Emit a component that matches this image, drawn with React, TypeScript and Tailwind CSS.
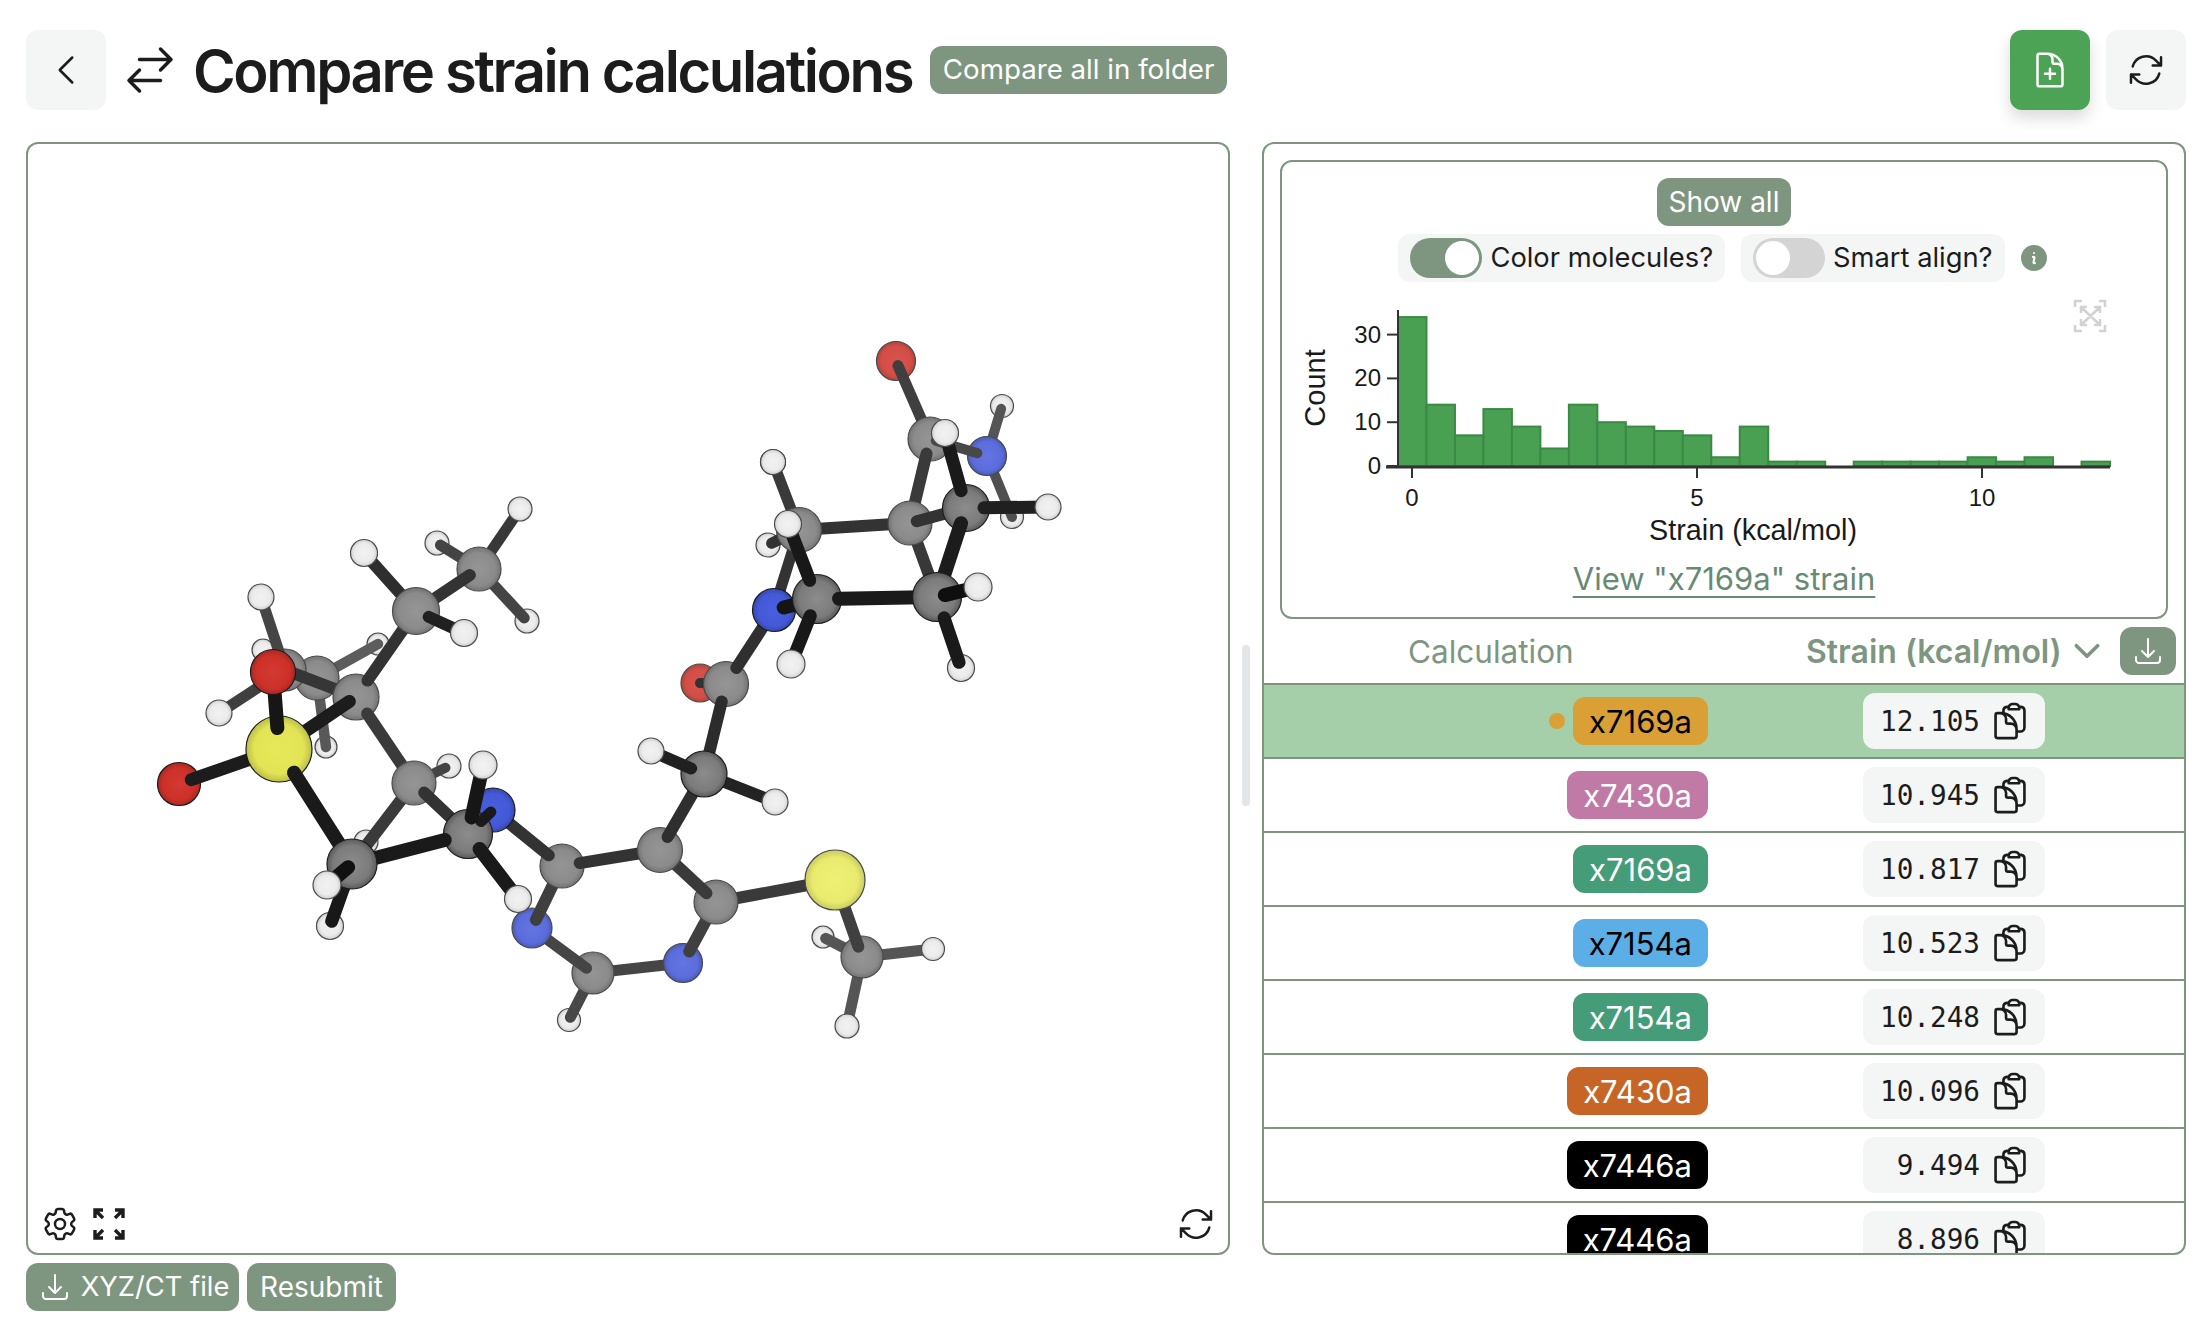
import {
  HiOutlineArrowDownTray,
  HiOutlineArrowPath,
  HiOutlineArrowsRightLeft,
  HiOutlineChevronDown,
  HiOutlineChevronLeft,
  HiOutlineClipboardDocument,
  HiOutlineCog6Tooth,
  HiOutlineDocumentPlus,
  HiInformationCircle,
} from 'react-icons/hi2';

type Kind = 'C' | 'D' | 'H' | 'Od' | 'Ol' | 'Nd' | 'Nl' | 'Sd' | 'Sl';

const atoms: Record<string, [number, number, number, Kind]> = {
  // left ring and sulfonyl
  o1: [273, 672, 22.5, 'Od'],
  s1: [279, 749, 33, 'Sd'],
  o2: [179, 784, 21.5, 'Od'],
  h1: [261, 597, 13, 'H'],
  c1: [285, 670, 21, 'C'],
  c2: [317, 678, 22, 'C'],
  h2: [263, 650, 11, 'H'],
  h3: [219, 713, 13, 'H'],
  h4: [378, 644, 11, 'H'],
  h5: [326, 747, 11, 'H'],
  c3: [356, 697, 23, 'C'],
  c4: [416, 611, 23.5, 'C'],
  h6: [364, 553, 13.5, 'H'],
  h7: [464, 633, 13.5, 'H'],
  c5: [479, 569, 22, 'C'],
  h8: [437, 543, 12, 'H'],
  h9: [527, 621, 12, 'H'],
  h10: [520, 509, 12, 'H'],
  c6: [414, 783, 22, 'C'],
  h11: [449, 766, 12, 'H'],
  h12: [483, 765, 14, 'H'],
  n1: [493, 810, 22, 'Nd'],
  c7: [468, 834, 24.5, 'D'],
  c8: [352, 864, 25, 'D'],
  h13: [366, 842, 12, 'H'],
  h14: [327, 885, 14, 'H'],
  h15: [330, 926, 13.5, 'H'],
  h16: [518, 899, 13.5, 'H'],
  // pyrimidine
  c9: [562, 866, 22, 'C'],
  n2: [532, 928, 20, 'Nl'],
  c10: [660, 850, 22.5, 'C'],
  c11: [716, 902, 22, 'C'],
  c12: [593, 973, 21, 'C'],
  n3: [683, 963, 19.5, 'Nl'],
  h17: [569, 1020, 11.5, 'H'],
  s2: [835, 880, 30, 'Sl'],
  c13: [862, 957, 21, 'C'],
  h18: [823, 937, 11, 'H'],
  h19: [933, 949, 11.5, 'H'],
  h20: [847, 1026, 12, 'H'],
  c14: [704, 774, 23, 'D'],
  h21: [775, 802, 13, 'H'],
  h22: [651, 751, 13, 'H'],
  // upper cage
  o3: [896, 361, 19.5, 'Ol'],
  c15: [930, 439, 22, 'C'],
  h23: [945, 433, 13.5, 'H'],
  n4: [987, 456, 19.5, 'Nl'],
  h24: [1002, 406, 11.5, 'H'],
  c16: [966, 508, 23.5, 'D'],
  c17: [910, 523, 22, 'C'],
  h25: [1048, 507, 13, 'H'],
  h26: [1012, 517, 11.5, 'H'],
  c18: [799, 530, 22.5, 'C'],
  h27: [773, 462, 12.5, 'H'],
  h28: [788, 524, 13.5, 'H'],
  h29: [768, 545, 12, 'H'],
  c19: [817, 599, 24.5, 'D'],
  c20: [937, 597, 24.5, 'D'],
  h30: [978, 587, 14, 'H'],
  n5: [774, 610, 21.5, 'Nd'],
  h31: [791, 664, 14, 'H'],
  h32: [961, 668, 13.5, 'H'],
  c21: [726, 684, 22.5, 'C'],
  o4: [700, 683, 19, 'Ol'],
};

// far to near; a string draws an atom, a tuple draws a bond [from, to, width, colour, inset at from, inset at to]
type Op = string | [string, string, number, string, number?, number?];

const scene: Op[] = [
  // left cluster
  'h2', 'h4', 'h5',
  ['c2', 'h4', 10.5, '#5c5c5c'],
  ['c2', 'h5', 10.5, '#585858'],
  'c2', 'c1',
  ['h1', 'c1', 11, '#454545'],
  ['h3', 'c1', 11, '#3f3f3f', 4],
  'h1', 'h3',
  ['c1', 'c3', 12, '#363636', 8],
  'c3',
  ['c3', 'c4', 12, '#333333', 20],
  'h8', 'h9',
  ['c5', 'h8', 11, '#444444', 0, 4],
  ['c5', 'h9', 11, '#444444', 0, 4],
  ['c5', 'h10', 11, '#383838'],
  'h10',
  'c5',
  ['c5', 'c4', 12, '#333333', 11],
  ['c4', 'h6', 12, '#2e2e2e'],
  'c4',
  ['c4', 'h7', 12, '#202020', 14],
  'h6', 'h7',
  'h13', 'h11',
  ['c3', 'c6', 12, '#3a3a3a', 20],
  ['c6', 'c8', 12, '#3a3a3a'],
  ['c6', 'h11', 10, '#444444', 0, 4],
  'c6',
  'o2',
  ['o2', 's1', 13, '#1c1c1c', 13],
  ['c3', 's1', 13, '#1c1c1c', 8],
  's1',
  ['s1', 'o1', 14, '#161616', 21],
  'o1',
  ['s1', 'c8', 14, '#1a1a1a', 28],
  'h15',
  ['h15', 'c8', 13, '#181818', 5],
  // pyrimidine
  'h17',
  ['h17', 'c12', 11, '#484848', 3],
  ['c12', 'n3', 11, '#454545'],
  'c12',
  ['n2', 'c12', 11, '#454545', 0, 8],
  'n2',
  ['n2', 'c9', 12, '#3f3f3f', 9],
  'c9',
  ['n1', 'c9', 12, '#333333', 0, 17],
  'n1',
  ['c6', 'c7', 12, '#333333', 14],
  'c7',
  ['c8', 'c7', 14, '#1a1a1a', 24, 24],
  'c8',
  ['c8', 'h14', 14, '#111111', 5],
  'h14',
  ['c7', 'n1', 11, '#1a1a1a', 18, 3],
  ['c7', 'h12', 14, '#161616', 17],
  ['c7', 'h16', 14, '#1a1a1a', 19],
  'h12', 'h16',
  'n3',
  ['n3', 'c11', 12, '#404040', 13],
  ['c11', 's2', 12, '#3a3a3a'],
  'c11',
  ['c11', 'c10', 12, '#3a3a3a', 13],
  ['c9', 'c10', 12, '#333333', 18],
  'c10',
  ['c10', 'c14', 12, '#2f2f2f', 15],
  'h18',
  ['h18', 'c13', 11, '#555555', 3],
  ['c13', 'h19', 11, '#555555'],
  ['c13', 'h20', 11, '#555555'],
  'h19', 'h20',
  'c13',
  ['s2', 'c13', 12, '#404040', 0, 11],
  's2',
  // upper cage
  'o4',
  ['c21', 'o4', 10, '#333333'],
  'c21',
  ['c21', 'c14', 12, '#2c2c2c', 18],
  ['c14', 'h21', 12, '#232323'],
  'c14',
  ['c14', 'h22', 12, '#202020', 14],
  'h21', 'h22',
  ['n5', 'c21', 12, '#303030', 0, 19],
  'h29', 'h27',
  ['h29', 'c18', 11, '#333333', 4],
  ['h27', 'c18', 11, '#3a3a3a'],
  'h27',
  ['c18', 'n5', 11, '#333333'],
  'h24',
  ['n4', 'h24', 10, '#555555', 0, 3],
  'h26',
  ['n4', 'h26', 10, '#505050'],
  'o3',
  ['o3', 'c15', 11, '#3f3f3f', 5],
  'c15',
  'n4',
  ['n4', 'c15', 10, '#484848', 10, 6],
  ['c18', 'c17', 12, '#333333'],
  'c18',
  ['c17', 'c20', 12, '#383838'],
  ['c15', 'c17', 12, '#3a3a3a', 15],
  'c17',
  ['c17', 'c16', 12, '#333333', 7],
  'c16',
  ['c16', 'h25', 13, '#202020', 18],
  'h25',
  'n5',
  ['n5', 'c19', 14, '#151515', 10],
  'c19',
  ['c19', 'c20', 14, '#1a1a1a', 22],
  ['c16', 'c20', 14, '#1c1c1c', 16],
  'c20',
  ['c20', 'h30', 14, '#0f0f0f', 8],
  'h30', 'h32',
  ['c20', 'h32', 13, '#1a1a1a', 22, 6],
  ['c19', 'h31', 13, '#181818', 18],
  ['c19', 'h28', 13, '#181818', 20],
  'h31', 'h28',
  ['c16', 'h23', 13, '#1a1a1a', 18],
  'h23',
];

function Molecule() {
  return (
    <svg viewBox="28 144 1200 1109" className="block w-full h-full">
      <defs>
        <radialGradient id="g-C"><stop offset="0%" stopColor="#959595" /><stop offset="75%" stopColor="#8b8b8b" /><stop offset="100%" stopColor="#737373" /></radialGradient>
        <radialGradient id="g-D"><stop offset="0%" stopColor="#8c8c8c" /><stop offset="75%" stopColor="#7b7b7b" /><stop offset="100%" stopColor="#5a5a5a" /></radialGradient>
        <radialGradient id="g-H"><stop offset="0%" stopColor="#f2f2f2" /><stop offset="70%" stopColor="#ebebeb" /><stop offset="100%" stopColor="#cfcfcf" /></radialGradient>
        <radialGradient id="g-Od"><stop offset="0%" stopColor="#d23a32" /><stop offset="75%" stopColor="#cc3029" /><stop offset="100%" stopColor="#a82822" /></radialGradient>
        <radialGradient id="g-Ol"><stop offset="0%" stopColor="#d9534c" /><stop offset="75%" stopColor="#d24e47" /><stop offset="100%" stopColor="#b2433d" /></radialGradient>
        <radialGradient id="g-Nd"><stop offset="0%" stopColor="#4a5fe0" /><stop offset="75%" stopColor="#4459d6" /><stop offset="100%" stopColor="#3648ae" /></radialGradient>
        <radialGradient id="g-Nl"><stop offset="0%" stopColor="#6475e2" /><stop offset="75%" stopColor="#5b6ddc" /><stop offset="100%" stopColor="#4b5ab6" /></radialGradient>
        <radialGradient id="g-Sd"><stop offset="0%" stopColor="#e6e85a" /><stop offset="75%" stopColor="#e2e456" /><stop offset="100%" stopColor="#bcbe48" /></radialGradient>
        <radialGradient id="g-Sl"><stop offset="0%" stopColor="#eef076" /><stop offset="75%" stopColor="#e9eb6e" /><stop offset="100%" stopColor="#c8ca60" /></radialGradient>
      </defs>
      {scene.map((op, i) => {
        if (typeof op === 'string') {
          const [x, y, r, k] = atoms[op];
          return <circle key={i} cx={x} cy={y} r={r} fill={`url(#g-${k})`} stroke={k === 'D' || k === 'Od' || k === 'Nd' || k === 'Sd' ? '#1c1c1c' : '#4a4a4a'} strokeWidth="1.2" />;
        }
        const [a, b, w, color, ia = 0, ib = 0] = op;
        const [x1, y1] = atoms[a];
        const [x2, y2] = atoms[b];
        const len = Math.hypot(x2 - x1, y2 - y1);
        const ux = (x2 - x1) / len;
        const uy = (y2 - y1) / len;
        return <line key={i} x1={x1 + ux * ia} y1={y1 + uy * ia} x2={x2 - ux * ib} y2={y2 - uy * ib} stroke={color} strokeWidth={w} strokeLinecap="round" />;
      })}
    </svg>
  );
}

const counts = [34, 14, 7, 13, 9, 4, 14, 10, 9, 8, 7, 2, 9, 1, 1, 0, 1, 1, 1, 1, 2, 1, 2, 0, 1];

function Histogram() {
  const base = 466;
  const unit = 4.38;
  return (
    <svg viewBox="1282 282 884 270" className="block w-[884px] h-[270px]" fontFamily="'Liberation Sans', Arial, sans-serif" fill="#1a1a1a">
      {counts.map((c, i) =>
        c > 0 ? <rect key={i} x={1398 + i * 28.48} y={base - c * unit} width={28.48} height={c * unit} fill="#4aa052" stroke="#3a8a45" strokeWidth="2" /> : null,
      )}
      <line x1="1398" y1="310" x2="1398" y2="468" stroke="#333333" strokeWidth="2" />
      <line x1="1386" y1="467" x2="2110" y2="467" stroke="#333333" strokeWidth="3" />
      {[0, 10, 20, 30].map(v => {
        const y = base - v * unit;
        return (
          <g key={v}>
            <line x1="1387" y1={y} x2="1398" y2={y} stroke="#333333" strokeWidth="2" />
            <text x="1381" y={y + 8} fontSize="24" textAnchor="end">{v}</text>
          </g>
        );
      })}
      {[[0, 1412], [5, 1697], [10, 1982]].map(([v, x]) => (
        <g key={v}>
          <line x1={x} y1="467" x2={x} y2="478" stroke="#333333" strokeWidth="2" />
          <text x={x} y="506" fontSize="24" textAnchor="middle">{v}</text>
        </g>
      ))}
      <text x="1753" y="540" fontSize="28.8" textAnchor="middle">Strain (kcal/mol)</text>
      <text x="0" y="0" fontSize="29" textAnchor="middle" transform="translate(1325 388) rotate(-90)">Count</text>
      <g stroke="#d2d2d2" strokeWidth="2.5" fill="none">
        <path d="M2075 307v-6h7M2099 301h6v6M2105 325v6h-6M2082 331h-7v-6" />
        <path d="M2082 308l17 16M2099 308l-17 16M2081 313v-6h6M2100 313v-6h-6M2081 319v6h6M2100 319v6h-6" />
      </g>
    </svg>
  );
}

function Toggle({ on, label }: { on: boolean; label: string }) {
  return (
    <div className="h-12 rounded-[12px] bg-[#f4f6f5] flex items-center px-3 gap-2 text-[27.3px] text-[#1c1c1c]">
      <div className={on ? 'w-[72px] h-10 rounded-full bg-[#7e967f] flex items-center justify-end pr-[3px]' : 'w-[72px] h-10 rounded-full bg-[#d4d4d4] flex items-center justify-start pl-[3px]'}>
        <div className="w-[34px] h-[34px] rounded-full bg-white" />
      </div>
      <span>{label}</span>
    </div>
  );
}

const rows = [
  { name: 'x7169a', value: '12.105', color: 'bg-[#daa035] text-black', selected: true },
  { name: 'x7430a', value: '10.945', color: 'bg-[#c179a5] text-white' },
  { name: 'x7169a', value: '10.817', color: 'bg-[#459c78] text-white' },
  { name: 'x7154a', value: '10.523', color: 'bg-[#5cafe6] text-black' },
  { name: 'x7154a', value: '10.248', color: 'bg-[#459c78] text-white' },
  { name: 'x7430a', value: '10.096', color: 'bg-[#c66526] text-white' },
  { name: 'x7446a', value: '9.494', color: 'bg-black text-white' },
  { name: 'x7446a', value: '8.896', color: 'bg-black text-white' },
];

function SageButton({ children, className = '' }: { children: React.ReactNode; className?: string }) {
  return <div className={`h-12 rounded-[12px] bg-[#7e967f] text-white flex items-center justify-center text-[28px] ${className}`}>{children}</div>;
}

export default function App() {
  return (
    <div className="w-[2210px] h-[1338px] bg-white pt-[30px] pl-[26px] pr-[24px] font-['Inter',sans-serif] text-[#1c1c1c] overflow-hidden">
      <div className="h-20 flex items-center">
        <div className="w-20 h-20 rounded-[12px] bg-[#f4f6f5] flex items-center justify-center">
          <HiOutlineChevronLeft size={40} />
        </div>
        <HiOutlineArrowsRightLeft size={56} className="ml-4" />
        <h1 className="ml-[15px] mt-[1px] text-[58px] font-semibold tracking-[-0.041em] leading-none">Compare strain calculations</h1>
        <SageButton className="ml-[18px] w-[297px]">
          <span className="text-[27.7px]">Compare all in folder</span>
        </SageButton>
        <div className="ml-auto w-20 h-20 rounded-[12px] bg-[#4da355] text-white flex items-center justify-center shadow-[0_8px_16px_rgba(0,0,0,0.15)]">
          <HiOutlineDocumentPlus size={40} />
        </div>
        <div className="ml-4 w-20 h-20 rounded-[12px] bg-[#f4f6f5] flex items-center justify-center">
          <HiOutlineArrowPath size={40} />
        </div>
      </div>

      <div className="mt-8 flex items-start">
        <div className="w-[1204px]">
          <div className="relative h-[1113px] border-2 border-[#7e967f] rounded-[12px] overflow-hidden">
            <Molecule />
            <div className="absolute left-[12px] bottom-[9px] flex items-center gap-[10px]">
              <HiOutlineCog6Tooth size={40} />
              <svg width="38" height="38" viewBox="0 0 38 38" fill="none" stroke="#1c1c1c" strokeWidth="3.4">
                <path d="M5 13V5h8M5 5l8 8M33 13V5h-8M33 5l-8 8M5 25v8h8M5 33l8-8M33 25v8h-8M33 33l-8-8" />
              </svg>
            </div>
            <div className="absolute right-[12px] bottom-[9px]">
              <HiOutlineArrowPath size={40} />
            </div>
          </div>
          <div className="mt-2 flex gap-2">
            <SageButton className="w-[213px] gap-[10px] pl-[3px]">
              <HiOutlineArrowDownTray size={32} />
              <span className="text-[27.3px]">XYZ/CT file</span>
            </SageButton>
            <SageButton className="w-[149px]">Resubmit</SageButton>
          </div>
        </div>

        <div className="ml-3 mt-[503px] w-2 h-[161px] rounded-full bg-[#e3e5e6]" />

        <div className="ml-3 w-[924px] h-[1113px] border-2 border-[#7e967f] rounded-[12px] overflow-hidden">
          <div className="mx-4 mt-4 h-[459px] border-2 border-[#7e967f] rounded-[12px] flex flex-col items-center pt-4">
            <SageButton className="w-[134px]">Show all</SageButton>
            <div className="mt-2 flex items-center">
              <Toggle on label="Color molecules?" />
              <div className="ml-4">
                <Toggle on={false} label="Smart align?" />
              </div>
              <HiInformationCircle size={32} className="text-[#7e967f] ml-[13px]" />
            </div>
            <Histogram />
            <a className="mt-[7px] text-[31px] leading-10 text-[#678a74] underline underline-offset-[6px] decoration-2">View "x7169a" strain</a>
          </div>
          <div className="h-16 flex items-center text-[32px] text-[#7e967f]">
            <span className="ml-[144px] w-[398px] mt-[2px] text-[31.5px]">Calculation</span>
            <span className="mt-[2px] font-semibold">Strain (kcal/mol)</span>
            <HiOutlineChevronDown size={34} strokeWidth={2.6} className="ml-[8px]" />
            <div className="ml-4 w-14 h-12 rounded-[12px] bg-[#7e967f] text-white flex items-center justify-center">
              <HiOutlineArrowDownTray size={32} />
            </div>
          </div>
          {rows.map((r, i) => (
            <div key={i} className={r.selected ? 'h-[74px] border-t-2 border-[#7e967f] flex items-center bg-[#a5cfa8]' : 'h-[74px] border-t-2 border-[#7e967f] flex items-center'}>
              <div className="w-[444px] flex items-center justify-end gap-2">
                {r.selected && <div className="w-4 h-4 rounded-full bg-[#daa035]" />}
                <div className={`h-12 rounded-[12px] px-4 pt-[2px] flex items-center text-[31px] ${r.color}`}>{r.name}</div>
              </div>
              <div className="ml-[155px] w-[182px] h-14 rounded-[12px] bg-[#f4f6f5] flex items-center justify-end pr-[14px] gap-[9px]">
                <span className="pt-[2px] font-['DejaVu_Sans_Mono',monospace] text-[27.7px]">{r.value}</span>
                <HiOutlineClipboardDocument size={42} />
              </div>
            </div>
          ))}
        </div>
      </div>
    </div>
  );
}
